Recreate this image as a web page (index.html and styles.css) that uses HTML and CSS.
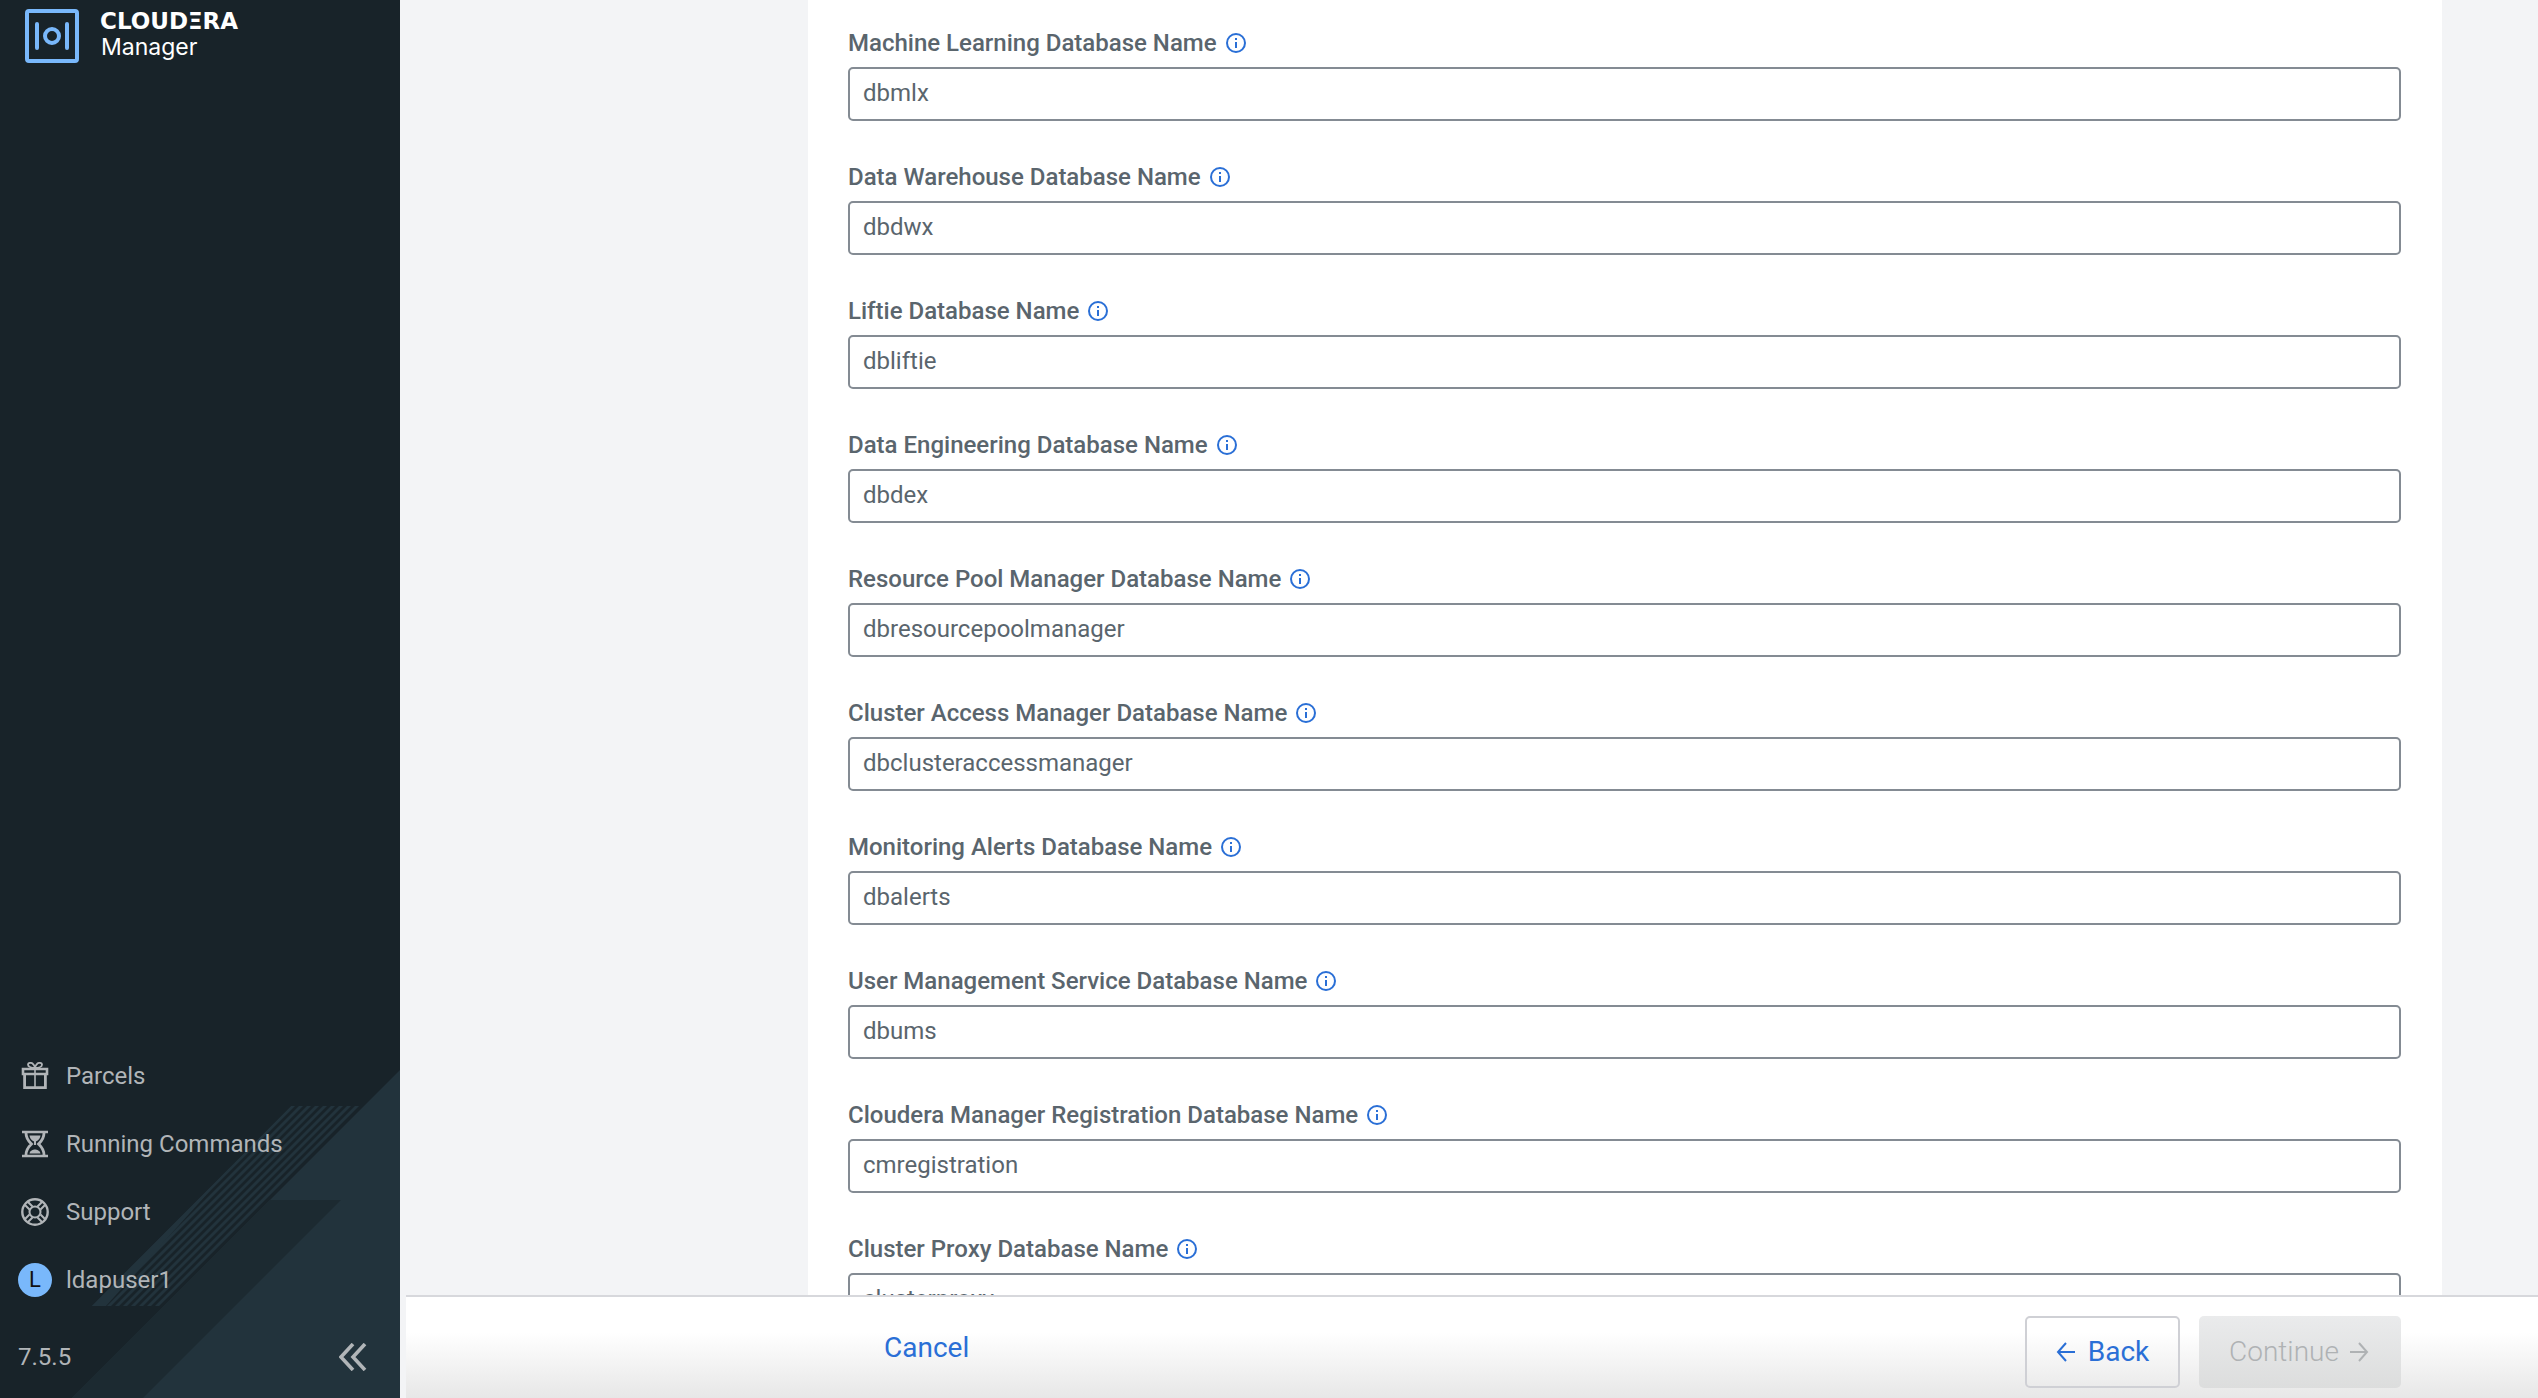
FILE: index.html
```html
<!DOCTYPE html>
<html lang="en">
<head>
<meta charset="utf-8">
<title>Cloudera Manager</title>
<link rel="stylesheet" href="styles.css">
</head>
<body>
<svg class="defs" aria-hidden="true">
  <symbol id="info" viewBox="0 0 20 20"><circle cx="10" cy="10" r="9" fill="none" stroke="currentColor" stroke-width="2"/><path d="M10 9v6M10 5v2" stroke="currentColor" stroke-width="2"/></symbol>
</svg>
<div class="app">
  <aside class="sidebar">
    <svg class="backdrop" viewBox="0 0 400 328" aria-hidden="true">
      <defs><pattern id="stripes" width="8" height="8" patternUnits="userSpaceOnUse" patternTransform="translate(291 36) skewX(-45)"><rect width="4" height="8" fill="#22333c"/></pattern></defs>
      <path d="M400 0V328H72Z" fill="#22333c"/>
      <path d="M270 130H341L143 328H72Z" fill="#1c2a31"/>
      <path d="M291 36H362L162 236H92Z" fill="url(#stripes)"/>
      <path d="M235 93L92 236H106Z" fill="#22333c"/>
    </svg>
    <a class="brand" href="#">
      <svg class="brand-mark" viewBox="0 0 54 54" aria-hidden="true"><g fill="none" stroke="#79b8fb" stroke-width="4"><rect x="2" y="2" width="50" height="50" rx="2"/><path d="M12 15v24M42 15v24" stroke-linecap="round"/><circle cx="27" cy="27" r="7"/></g></svg>
      <span class="brand-text"><span class="brand-name">CLOUDΞRA</span><span class="brand-product">Manager</span></span>
    </a>
    <nav class="nav">
      <a href="#"><svg viewBox="0 0 28 28" aria-hidden="true"><g fill="none" stroke="currentColor"><path d="M2 7H26V12H2Z" stroke-width="2.6"/><path d="M3.6 12V25.6H24.4V12" stroke-width="2.8"/><path d="M14 6V25" stroke-width="1.6"/><path d="M14 6C11 6 7 5 7 2.800C7 .4 11 .2 12.400 2.400C13.200 3.600 14 4.600 14 6C14 4.600 14.800 3.600 15.600 2.400C17 .2 21 .4 21 2.800C21 5 17 6 14 6Z" stroke-width="1.800"/></g></svg>Parcels</a>
      <a href="#"><svg viewBox="0 0 28 28" aria-hidden="true"><g fill="none" stroke="currentColor"><path d="M1 2H27M1 26H27" stroke-width="2.600"/><path d="M5 3C5 9 8 11.500 10.500 14C8 16.500 5 19 5 25M23 3C23 9 20 11.500 17.500 14C20 16.500 23 19 23 25" stroke-width="2.800"/></g><path d="M8.500 5.500H19.500C19 9 16.500 11.500 14 11.500S9 9 8.500 5.500ZM8.500 23.500C9 20.500 12 19.500 14 19.500S19 20.500 19.500 23.500Z" fill="currentColor"/><path d="M14 11V15" stroke="currentColor" stroke-width="2"/></svg>Running Commands</a>
      <a href="#"><svg viewBox="0 0 28 28" aria-hidden="true"><g fill="none" stroke="currentColor"><circle cx="14" cy="14" r="12.700" stroke-width="2.400"/><circle cx="14" cy="14" r="5.500" stroke-width="2"/><path d="M11.500 8.500L7 4M8.500 11.500L4 7M16.500 8.500L21 4M19.500 11.500L24 7M11.500 19.500L7 24M8.500 16.500L4 21M16.500 19.500L21 24M19.500 16.500L24 21" stroke-width="2"/></g></svg>Support</a>
      <a href="#"><span class="avatar">L</span>ldapuser1</a>
    </nav>
    <div class="version"><span>7.5.5</span><button type="button" aria-label="Collapse sidebar"><svg viewBox="0 0 28 28" aria-hidden="true"><path d="M14 1L2 14L14 27M26 1L14 14L26 27" fill="none" stroke="currentColor" stroke-width="3.600"/></svg></button></div>
  </aside>
  <main class="main">
    <form class="panel" id="setup">
      <div class="field"><label for="f1">Machine Learning Database Name <svg><use href="#info"/></svg></label><input id="f1" value="dbmlx"></div>
      <div class="field"><label for="f2">Data Warehouse Database Name <svg><use href="#info"/></svg></label><input id="f2" value="dbdwx"></div>
      <div class="field"><label for="f3">Liftie Database Name <svg><use href="#info"/></svg></label><input id="f3" value="dbliftie"></div>
      <div class="field"><label for="f4">Data Engineering Database Name <svg><use href="#info"/></svg></label><input id="f4" value="dbdex"></div>
      <div class="field"><label for="f5">Resource Pool Manager Database Name <svg><use href="#info"/></svg></label><input id="f5" value="dbresourcepoolmanager"></div>
      <div class="field"><label for="f6">Cluster Access Manager Database Name <svg><use href="#info"/></svg></label><input id="f6" value="dbclusteraccessmanager"></div>
      <div class="field"><label for="f7">Monitoring Alerts Database Name <svg><use href="#info"/></svg></label><input id="f7" value="dbalerts"></div>
      <div class="field"><label for="f8">User Management Service Database Name <svg><use href="#info"/></svg></label><input id="f8" value="dbums"></div>
      <div class="field"><label for="f9">Cloudera Manager Registration Database Name <svg><use href="#info"/></svg></label><input id="f9" value="cmregistration"></div>
      <div class="field"><label for="f10">Cluster Proxy Database Name <svg><use href="#info"/></svg></label><input id="f10" value="clusterproxy"></div>
    </form>
    <footer class="actions">
      <button class="cancel" type="button">Cancel</button>
      <button class="back" type="button"><svg viewBox="0 0 20 20" aria-hidden="true"><path d="M19 10H2M10 1L2 10L10 19"/></svg>Back</button>
      <button class="continue" type="submit" form="setup" disabled>Continue<svg viewBox="0 0 20 20" aria-hidden="true"><path d="M1 10H18M10 1L18 10L10 19"/></svg></button>
    </footer>
  </main>
</div>
</body>
</html>
```
FILE: styles.css
```css
* { box-sizing: border-box; }
body { margin: 0; font-family: Roboto, sans-serif; font-size: 24px; line-height: 32px; color: #5a656d; }
button, input { font: inherit; color: inherit; }
.defs { position: absolute; width: 0; height: 0; }
.app { display: flex; height: 100vh; overflow: hidden; background: #f3f4f6; }
.sidebar { position: relative; display: flex; flex-direction: column; flex: 0 0 400px; background: #182329; color: #b1b5b8; }
.backdrop { position: absolute; left: 0; bottom: 0; width: 100%; }
.brand { display: flex; gap: 21px; padding: 9px 25px; color: #fff; text-decoration: none; }
.brand-mark { width: 54px; height: 54px; }
.brand-text { display: flex; flex-direction: column; }
.brand-name { font: 700 23px/24px "DejaVu Sans", sans-serif; }
.brand-product { padding-left: 1px; font: 400 23px/28px Inter, sans-serif; }
.nav { position: relative; display: flex; flex-direction: column; margin-top: auto; }
.nav a { display: flex; align-items: center; gap: 14px; height: 68px; padding-left: 18px; color: inherit; text-decoration: none; }
.nav svg { width: 28px; height: 28px; margin: 0 3px; }
.avatar { display: grid; place-items: center; width: 34px; height: 34px; border-radius: 50%; background: #79b8fb; color: #111; font-size: 22px; }
.version { position: relative; display: flex; justify-content: space-between; align-items: center; height: 84px; padding: 2px 33px 0 18px; }
.version button { display: flex; padding: 0; border: 0; background: none; }
.version svg { width: 28px; height: 28px; }
.main { display: flex; flex-direction: column; flex: 1; min-width: 0; padding-left: 6px; }
.panel { flex: 1; min-height: 0; overflow: hidden; margin: 0 96px 0 402px; padding: 27px 41px 0 40px; background: #fff; }
.field { height: 134px; }
.field label { display: flex; align-items: center; gap: 9px; height: 32px; margin-bottom: 8px; font-weight: 500; }
.field label svg { width: 20px; height: 20px; color: #2a6fd6; }
.field input { display: block; width: 100%; height: 54px; padding: 0 13px 2px; border: 2px solid #848b93; border-radius: 5px; background: #fff; }
.actions { display: flex; align-items: flex-start; height: 103px; padding: 19px 137px 0 478px; border-top: 2px solid #d7d8dc; background: linear-gradient(#fff 35%, #e7e7e7); font-size: 28px; }
.actions button { display: flex; align-items: center; justify-content: center; height: 72px; border-radius: 5px; }
.actions svg { width: 20px; height: 20px; fill: none; stroke: currentColor; stroke-width: 2; }
.actions .cancel { height: 64px; padding: 0; margin-right: auto; border: 0; background: none; color: #2a6fd6; }
.actions .back { gap: 12px; width: 155px; margin-right: 19px; border: 2px solid #cfd0d5; background: transparent; color: #2a6fd6; }
.actions .continue { gap: 10px; width: 202px; padding: 0 8px 0 6px; border: 0; background: linear-gradient(#eaebec, #dcdddd); color: #afb2b4; font-weight: 300; }
```
